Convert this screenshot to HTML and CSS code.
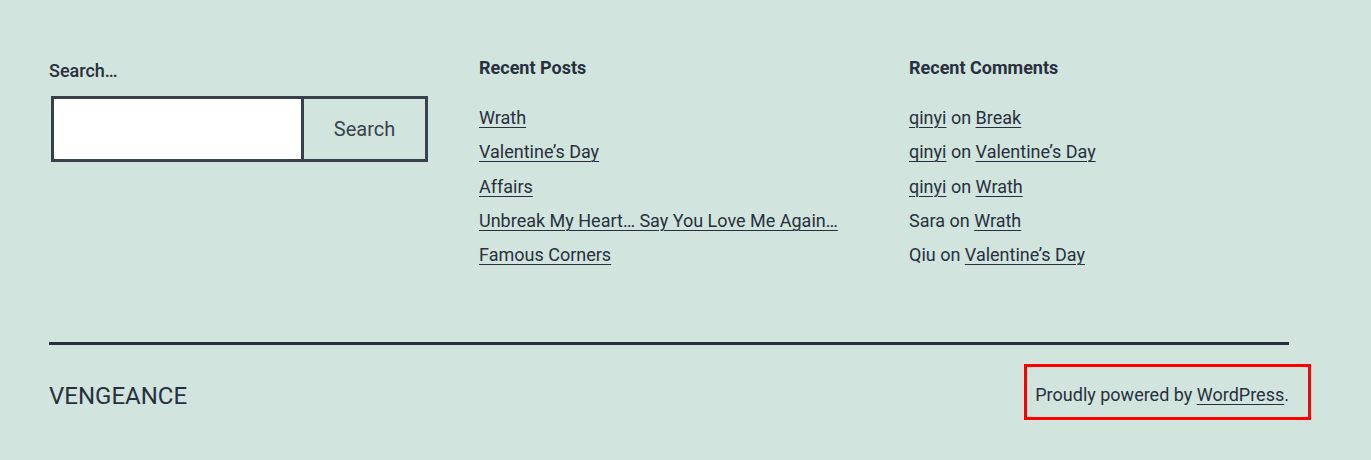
FILE: index.html
```html
<!DOCTYPE html>
<html lang="en">
<head>
<meta charset="utf-8">
<title>Vengeance</title>
<link rel="stylesheet" href="styles.css">
</head>
<body>
<aside class="widget-area">
  <section class="widget">
    <form class="search-form">
      <label class="search-label" for="s">Search…</label>
      <div class="search-row">
        <input class="search-input" id="s" type="search">
        <button class="search-btn" type="button">Search</button>
      </div>
    </form>
  </section>
  <section class="widget">
    <h2 class="widget-title">Recent Posts</h2>
    <ul class="widget-list">
      <li><a href="#">Wrath</a></li>
      <li><a href="#">Valentine’s Day</a></li>
      <li><a href="#">Affairs</a></li>
      <li><a href="#">Unbreak My Heart… Say You Love Me Again…</a></li>
      <li><a href="#">Famous Corners</a></li>
    </ul>
  </section>
  <section class="widget">
    <h2 class="widget-title">Recent Comments</h2>
    <ul class="widget-list">
      <li><a href="#">qinyi</a> on <a href="#">Break</a></li>
      <li><a href="#">qinyi</a> on <a href="#">Valentine’s Day</a></li>
      <li><a href="#">qinyi</a> on <a href="#">Wrath</a></li>
      <li>Sara on <a href="#">Wrath</a></li>
      <li>Qiu on <a href="#">Valentine’s Day</a></li>
    </ul>
  </section>
</aside>
<footer class="site-footer">
  <div class="site-name">VENGEANCE</div>
  <div class="powered">Proudly powered by <a href="#">WordPress</a>.</div>
</footer>
</body>
</html>
```
FILE: styles.css
```css
html, body {
  margin: 0;
  padding: 0;
}
body {
  background: #d1e4dd;
  color: #28303d;
  font-family: Roboto, "Liberation Sans", sans-serif;
  font-size: 18px;
  width: 1371px;
  height: 460px;
  overflow: hidden;
}
a {
  color: #28303d;
  text-decoration: underline;
  text-decoration-thickness: 1px;
  text-underline-offset: 3px;
}
.widget-area {
  display: grid;
  grid-template-columns: repeat(3, 1fr);
  column-gap: 50px;
  width: 1240px;
  margin: 0 0 0 49px;
  padding-top: 56px;
  height: 286px;
  box-sizing: border-box;
}
.widget-title {
  margin: 0;
  font-size: 18px;
  font-weight: 700;
  line-height: 24px;
}
.widget-list {
  list-style: none;
  margin: 21px 0 0;
  padding: 0;
}
.widget-list li {
  line-height: 34.3px;
}
.search-form {
  display: flex;
  flex-direction: column;
}
.search-label {
  font-size: 18px;
  font-weight: 500;
  line-height: 24px;
  margin-top: 3px;
  margin-bottom: 13px;
}
.search-row {
  display: flex;
  margin-left: 2px;
}
.search-input {
  width: 250px;
  height: 66px;
  box-sizing: border-box;
  border: 3px solid #39414d;
  border-right: 0;
  background: #fff;
  margin: 0;
  padding: 10px;
  font-family: inherit;
  font-size: 18px;
}
.search-btn {
  width: 127px;
  height: 66px;
  box-sizing: border-box;
  border: 3px solid #39414d;
  background: transparent;
  color: #39414d;
  font-family: inherit;
  font-size: 20px;
  font-weight: 400;
  margin: 0;
  padding: 0;
}
.site-footer {
  width: 1240px;
  margin-left: 49px;
  border-top: 3px solid #28303d;
  margin-top: 56px;
  display: flex;
  justify-content: space-between;
  align-items: flex-start;
  padding-top: 19px;
}
.site-name {
  font-size: 24px;
  line-height: 32px;
  margin-top: 16px;
}
.powered {
  font-size: 18px;
  line-height: 24px;
  border: 3px solid #f00;
  padding: 16px 19px 10px 8px;
  margin-right: -22px;
}
```
